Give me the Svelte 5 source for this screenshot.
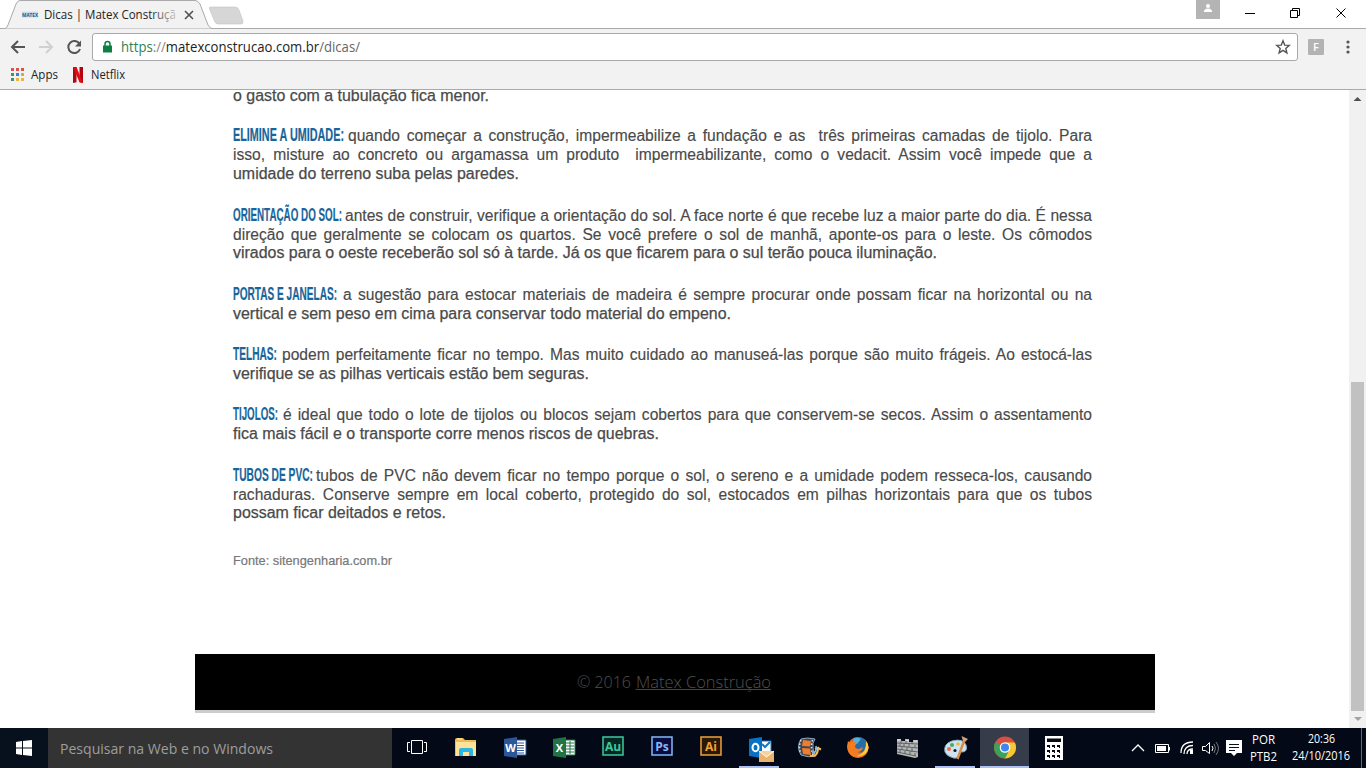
<script>
  const tips = [
    { title: 'ELIMINE A UMIDADE:', w: 111, gap: 4, lines: ['quando começar a construção, impermeabilize a fundação e as\u00a0 três primeiras camadas de tijolo. Para', 'isso, misture ao concreto ou argamassa um produto\u00a0 impermeabilizante, como o vedacit. Assim você impede que a', 'umidade do terreno suba pelas paredes.'], lw: 286 },
    { title: 'ORIENTAÇÃO DO SOL:', w: 109, gap: 3, lines: ['antes de construir, verifique a orientação do sol. A face norte é que recebe luz a maior parte do dia. É nessa', 'direção que geralmente se colocam os quartos. Se você prefere o sol de manhã, aponte-os para o leste. Os cômodos', 'virados para o oeste receberão sol só à tarde. Já os que ficarem para o sul terão pouca iluminação.'], lw: 704 },
    { title: 'PORTAS E JANELAS:', w: 104, gap: 6, lines: ['a sugestão para estocar materiais de madeira é sempre procurar onde possam ficar na horizontal ou na', 'vertical e sem peso em cima para conservar todo material do empeno.'], lw: 498 },
    { title: 'TELHAS:', w: 44, gap: 5, lines: ['podem perfeitamente ficar no tempo. Mas muito cuidado ao manuseá-las porque são muito frágeis. Ao estocá-las', 'verifique se as pilhas verticais estão bem seguras.'], lw: 356 },
    { title: 'TIJOLOS:', w: 45, gap: 5, lines: ['é ideal que todo o lote de tijolos ou blocos sejam cobertos para que conservem-se secos. Assim o assentamento', 'fica mais fácil e o transporte corre menos riscos de quebras.'], lw: 426 },
    { title: 'TUBOS DE PVC:', w: 80, gap: 3, lines: ['tubos de PVC não devem ficar no tempo porque o sol, o sereno e a umidade podem resseca-los, causando', 'rachaduras. Conserve sempre em local coberto, protegido do sol, estocados em pilhas horizontais para que os tubos', 'possam ficar deitados e retos.'], lw: 213 }
  ];
  const appColors = ['#d9534a', '#d9534a', '#d9534a', '#3d9a5f', '#3b7de0', '#e8a33a', '#3d9a5f', '#e9b53c', '#e9b53c'];
  const apps = ['task', 'folder', 'word', 'excel', 'au', 'ps', 'ai', 'outlook', 'film', 'firefox', 'wall', 'paint', 'chrome', 'calc'];
</script>

{#snippet label(text, width, size, color)}
  <svg class="label" width={width} height="20"><text x="0" y="15" font-size={size} fill={color} textLength={width} lengthAdjust="spacingAndGlyphs">{text}</text></svg>
{/snippet}

{#snippet adobe(text, color, bg)}
  <rect x="1" y="0" width="20" height="18" fill={bg} stroke={color} stroke-width="1.5" />
  <text x="11" y="13.500" text-anchor="middle" font-size="12" font-weight="700" fill={color}>{text}</text>
{/snippet}

<div class="screen">
  <header class="tabs">
    <svg class="strip" width="260" height="29">
      <path d="M0 28.5H5Q7 28 8 25L16 4Q17.500 .5 20 .5H195Q198 .5 200 4L208 25Q210 28.500 212 28.500H260V29H0Z" fill="#f2f2f2" stroke="#aaa" />
      <path d="M210 7H235Q238 7 239 10L243 21Q243.500 24 241 24H218Q215.500 24 214.500 21L209.500 9Q209 7 210 7Z" fill="#d6d6d6" stroke="#c2c2c2" stroke-width=".6" />
      <rect x="22" y="11.500" width="16" height="6" fill="#c8ddec" />
      <text x="22" y="17" font-size="6" font-weight="700" fill="#17618f" textLength="16" lengthAdjust="spacingAndGlyphs">MATEX</text>
      <defs><linearGradient id="fade" gradientUnits="userSpaceOnUse" x1="150" x2="178" y1="0" y2="0"><stop stop-color="#222" /><stop offset="1" stop-color="#222" stop-opacity=".15" /></linearGradient></defs>
      <text x="44" y="19" font-size="12" fill="url(#fade)" textLength="132" lengthAdjust="spacingAndGlyphs">Dicas | Matex Construçã</text>
      <path d="M185 11L193 19M193 11L185 19" stroke="#505050" stroke-width="1.600" />
    </svg>
    <svg class="winctl" width="170" height="28">
      <path d="M0 0H24V19H0Z" fill="#b4b4b4" /><circle cx="12" cy="6" r="2" fill="#fff" /><path d="M8 12V11Q8.500 8.500 12 8.500T16 11V12Z" fill="#fff" />
      <path d="M49 13.500H59M94.500 10.500H101.500V17.500H94.500ZM96.500 10V8.500H103.500V15.500H102M140.500 8.500L149.500 17.500M149.500 8.500L140.500 17.500" fill="none" stroke="#000" stroke-width="1" />
    </svg>
  </header>

  <div class="toolbar">
    <svg class="nav" width="92" height="36">
      <path d="M25 18H12.500M18 12L12 18L18 24" fill="none" stroke="#555" stroke-width="2" />
      <path d="M39 18H51.500M46 12L52 18L46 24" fill="none" stroke="#d0d0d0" stroke-width="2" />
      <path d="M79.500 15A6 6 0 1 0 80 20" fill="none" stroke="#555" stroke-width="2" /><path d="M81 11.500V17.500H75Z" fill="#555" />
    </svg>
    <div class="address">
      <svg class="lock" width="11" height="14"><path d="M1 5.500H10V12.500H1Z" fill="#0b8043" /><path d="M3 6V4Q3 1.500 5.500 1.500T8 4V6" fill="none" stroke="#0b8043" stroke-width="1.500" /></svg>
      <svg width="239" height="20" class="label"><text x="0" y="15" font-size="14" textLength="239" lengthAdjust="spacingAndGlyphs"><tspan fill="#2b8253">https</tspan><tspan fill="#858585">://</tspan><tspan fill="#222">matexconstrucao.com.br</tspan><tspan fill="#666">/dicas/</tspan></text></svg>
      <svg class="star" width="16" height="16"><path d="M8 1.800L9.700 6.100L14.300 6.400L10.800 9.400L11.900 13.900L8 11.400L4.100 13.900L5.200 9.400L1.700 6.400L6.300 6.100Z" fill="none" stroke="#555" stroke-width="1.400" /></svg>
    </div>
    <span class="ext">F</span>
    <svg width="6" height="16" class="dots"><circle cx="3" cy="3" r="1.600" /><circle cx="3" cy="8" r="1.600" /><circle cx="3" cy="13" r="1.600" /></svg>
  </div>

  <div class="bookmarks">
    <span class="grid">{#each appColors as c}<i style:background={c}></i>{/each}</span>
    {@render label('Apps', 27, 12, '#222')}
    <svg class="n" width="10" height="16"><path d="M0 0H3.500V15.300L0 16ZM6.500 0H10V16L6.500 15.300Z" fill="#b0060f" /><path d="M0 0H3.500L10 16L6.500 15.300Z" fill="#e50914" /></svg>
    {@render label('Netflix', 34, 12, '#222')}
  </div>

  <main>
    <article>
      <p class="first"><svg class="row" width="258" height="20"><text x="0" y="14" textLength="256" lengthAdjust="spacingAndGlyphs">o gasto com a tubulação fica menor.</text></svg></p>
      {#each tips as tip}
        <section>
          {#each tip.lines as line, i}
            {#if i === 0}
              <div class="lead"><svg width={tip.w} height="19" style:margin-right="{tip.gap}px"><text class="title" x="0" y="14.600" textLength={tip.w} lengthAdjust="spacingAndGlyphs">{tip.title}</text></svg><span>{line}</span></div>
            {:else if i < tip.lines.length - 1}
              <div class="full">{line}</div>
            {:else}
              <div><svg class="row" width={tip.lw + 2} height="19"><text x="0" y="14.200" textLength={tip.lw} lengthAdjust="spacingAndGlyphs">{line}</text></svg></div>
            {/if}
          {/each}
        </section>
      {/each}
      <svg class="source" width="160" height="20"><text x="0" y="15" textLength="159" lengthAdjust="spacingAndGlyphs">Fonte: sitengenharia.com.br</text></svg>
      <footer>
        <svg width="196" height="26"><g font-size="16.500"><text x="0" y="19" textLength="54" lengthAdjust="spacingAndGlyphs">© 2016</text><text x="59" y="19" textLength="135" lengthAdjust="spacingAndGlyphs">Matex Construção</text></g><path d="M58.500 20.500H194" stroke="#454545" /></svg>
      </footer>
    </article>
    <aside>
      <svg width="17" height="17"><path d="M4.500 11L8.500 7L12.500 11Z" fill="#505050" /></svg>
      <b></b>
      <svg width="17" height="17"><path d="M5 6L9 10L13 6Z" fill="#a3a3a3" /></svg>
    </aside>
  </main>

  <nav class="taskbar">
    <svg class="start" width="48" height="40"><path d="M16 14L22 13V19.500H16ZM23 13L32 12V19.500H23ZM16 20.500H22V27L16 26ZM23 20.500H32V28L23 27Z" fill="#fff" /></svg>
    <div class="search">{@render label('Pesquisar na Web e no Windows', 213, 15, '#9d9d9d')}</div>
    <div class="apps">
      {#each apps as app}
        <div class="app {app}">
          <svg width="26" height="24" viewBox="-2 -1 26 24" overflow="visible">
            {#if app === 'task'}
              <path d="M5.500 3.500H16.500V16.500H5.500ZM4 5.500H1.500V14.500H4M18 5.500H20.500V14.500H18" fill="none" stroke="#fff" />
            {:else if app === 'folder'}
              <path d="M0 3Q0 1 2 1H8L10 3H21V19H0Z" fill="#e9bd56" /><path d="M1 5H21V19H1Z" fill="#ffe298" /><path d="M4 19V13Q4 11 6 11H16Q18 11 18 13V19H14V15H8V19Z" fill="#29b6e5" /><path d="M2 2H7" stroke="#fff3c6" />
            {:else if app === 'word' || app === 'excel'}
              <path d="M10 3H22V18H10Z" fill="#fff" stroke={app === 'word' ? '#2b579a' : '#217346'} />
              {#if app === 'word'}<path d="M13 6H20M13 8.500H20M13 11H20M13 13.500H20M13 16H20" stroke="#2b579a" />{:else}<path d="M13 6H21M13 9H21M13 12H21M13 15H21M17 4V17" stroke="#217346" />{/if}
              <path d="M0 2L13 0V21L0 19Z" fill={app === 'word' ? '#2b579a' : '#217346'} /><text x="6.500" y="14.500" text-anchor="middle" fill="#fff" font-size="11" font-weight="700">{app === 'word' ? 'W' : 'X'}</text>
            {:else if app === 'au'}{@render adobe('Au', '#3fc7a0', '#052722')}
            {:else if app === 'ps'}{@render adobe('Ps', '#86b9f5', '#0b0b43')}
            {:else if app === 'ai'}{@render adobe('Ai', '#f1a33a', '#2b1907')}
            {:else if app === 'outlook'}
              <path d="M11 4H22V17H11Z" fill="#fff" stroke="#1677c7" /><path d="M13 7L16 10L21 5" fill="none" stroke="#1677c7" stroke-width="2" /><path d="M0 2L13 0V21L0 19Z" fill="#0872c4" /><ellipse cx="6.500" cy="10.500" rx="3" ry="3.700" fill="none" stroke="#fff" stroke-width="2" /><path d="M10 14H25V25H10Z" fill="#e8b36c" /><path d="M10 14L17.500 20L25 14" fill="#f6d2a0" stroke="#fff" />
            {:else if app === 'film'}
              <path d="M3 2Q9 0 17 2Q14 6 15 11Q15 16 18 19Q10 21 3 18Q-2 10 3 2Z" fill="#394756" stroke="#93a8bd" /><path d="M5 3L13 4L12 9.500L4 9ZM4 11L12 11.500L13 18L5 17Z" fill="#f47b28" /><path d="M3 3Q0 10 3 17M14.500 3Q12 11 15.500 19" fill="none" stroke="#d7e7f2" stroke-width="1.500" stroke-dasharray="1.500 2" /><path d="M12 19Q20 20 20 11L17 12M20 11L23 12.500" fill="none" stroke="#f3bb4e" stroke-width="2" /><path d="M14 16Q19 16 18 9" fill="none" stroke="#8bb7df" stroke-width="1.800" />
            {:else if app === 'firefox'}
              <circle cx="11" cy="10.500" r="10.500" fill="#ed651e" /><circle cx="12" cy="8" r="7.800" fill="#276ba9" /><path d="M7 1Q11 0 14 2L10 7L5 6Z" fill="#50b3db" /><path d="M1 4L3 6Q5 3 7 5L10 6L8 9Q8 12 12 12L16 10Q15 15 10 15Q16 18 20 12Q22 8 19 4Q24 11 19 17Q13 23 5 19Q-2 14 1 4Z" fill="#f47c20" /><path d="M19 4Q24 10 19 16Q15 20 10 19Q20 16 19 4Z" fill="#ffd03c" />
            {:else if app === 'wall'}
              <path d="M1 2H5V4H9V2H13V5H17V3H22V20L19 21L1 17Z" fill="#b5b7b6" /><path d="M1 6L22 7M1 9L22 11M1 12L22 15M1 15L20 19M5 3V6M10 4V7M16 5V7M4 6V9M8 7V10M13 7V10M19 8V11M6 10V13M11 10V14M16 11V15M4 13V16M9 14V17M14 14V18M19 16V19" stroke="#565b5c" stroke-width=".9" /><path d="M1 3H5M10 3L13 4M18 4H21" stroke="#e5e5e5" />
            {:else if app === 'paint'}
              <path d="M0 15Q-2 7 7 4Q18 1 21 8Q23 15 17 15Q14 14 14 18Q12 23 6 20Q2 19 0 15Z" fill="#cfe2ef" stroke="#8eadc2" /><circle cx="4" cy="12" r="2" fill="#ed6b4f" /><circle cx="7" cy="8" r="2" fill="#4aa75c" /><circle cx="13" cy="7" r="1.800" fill="#e3bd42" /><circle cx="10" cy="13.500" r="1.600" fill="#111a29" /><path d="M19 4L12.500 22" stroke="#d58f49" stroke-width="2.500" /><path d="M16.500 -1L23 2L20 5L18 4Z" fill="#d2a276" />
            {:else if app === 'chrome'}
              <circle cx="11" cy="10.500" r="11" fill="#dc4e40" /><path d="M11 10.500L1.500 5A11 11 0 0 0 11 21.500L16 13Z" fill="#39a35b" /><path d="M11 5.500H20.800A11 11 0 0 1 11 21.500L16 12Z" fill="#f6c933" /><circle cx="11" cy="10.500" r="5.300" fill="#fff" /><circle cx="11" cy="10.500" r="4" fill="#4086ef" />
            {:else}
              <path d="M2 -1H20V23H2Z" fill="#fff" /><path d="M4 1.500H18V5H4Z" fill="#050914" />
              {#each [8, 13, 18] as y}{#each [4, 9, 14] as x}<path d="M{x} {y}H{x + 3}V{y + 3}H{x + 2}V{y + 2}H{x}Z" fill="#050914" />{/each}{/each}
            {/if}
          </svg>
        </div>
      {/each}
    </div>
    <svg class="tray" width="116" height="40">
      <g fill="none" stroke="#fff"><path d="M2 23L8 17L14 23" stroke-width="1.300" /><path d="M25.500 16.500H38.500V24.500H25.500ZM39.500 19V22.500" /><path d="M51 25Q51 14 63 14M54 26Q54 17.500 63 17.500M57 26Q57 21 63 21" stroke-width="1.300" /><path d="M72.500 18.500H75.500L79.500 14.500V25.500L75.500 22.500H72.500Z" /><path d="M82 18Q84 20 82 23" /><path d="M84 16Q87 20 84 25M86 14Q91 20 86 27" stroke="#777" /></g>
      <path d="M27 18H36V23H27ZM60 22H63V26H60ZM96 12H112V25H107L104 28L101 25H96Z" fill="#fff" /><path d="M99 16.500H109M99 19.500H109M99 22.500H105" stroke="#07101c" />
    </svg>
    <div class="clock">{@render label('POR', 23, 12, '#fff')}{@render label('PTB2', 27, 12, '#fff')}</div>
    <div class="clock date">{@render label('20:36', 27, 12, '#fff')}{@render label('24/10/2016', 58, 12, '#fff')}</div>
    <div class="desk"></div>
  </nav>
</div>

<style>
  :global(body) { margin: 0; overflow: hidden; }
  .screen { width: 1366px; height: 768px; display: flex; flex-direction: column; background: #fff; font-family: "Open Sans", "Noto Sans", sans-serif; overflow: hidden; }
  svg { display: block; flex: none; }
  .label, article svg { overflow: visible; }
  .tabs { height: 29px; flex: none; display: flex; justify-content: space-between; background: linear-gradient(#fff 28px, #aaa 28px); }
  .toolbar { height: 36px; flex: none; display: flex; align-items: center; background: #f2f2f2; }
  .address { width: 1204px; height: 26px; border: 1px solid #a9a9a9; border-radius: 3px; background: #fff; display: flex; align-items: center; }
  .lock { margin: 0 8px 0 9px; }
  .star { margin-left: auto; margin-right: 6px; }
  .ext { width: 16px; height: 16px; margin-left: 10px; background: #b3b3b3; color: #fff; font-size: 11px; font-weight: 600; line-height: 16px; text-align: center; border-radius: 1px; }
  .dots { margin-left: 21px; fill: #555; }
  .bookmarks { height: 24px; flex: none; border-bottom: 1px solid #aaa; background: #f2f2f2; display: flex; align-items: center; padding: 0 0 0 11px; }
  .bookmarks svg { margin-top: -6px; }
  .grid { display: grid; grid-template-columns: repeat(3, 3px); gap: 2px; margin: -5px 7px 0 0; }
  .grid i { width: 3px; height: 3px; }
  .bookmarks .n { margin-left: 15px; margin-right: 8px; margin-top: -5px; }
  main { height: 638px; flex: none; display: flex; justify-content: space-between; overflow: hidden; }
  article { width: 960px; margin-left: 195px; font: 15.6px "Liberation Sans", Arial, sans-serif; color: #4a4a4a; -webkit-text-stroke: .15px #4a4a4a; }
  article text { fill: #4a4a4a; }
  article .row text { stroke: #4a4a4a; stroke-width: .25px; }
  .first { margin: -3.500px 0 19.500px 38px; height: 20px; }
  section { width: 859px; margin: 0 0 21.400px 38px; line-height: 19.400px; white-space: nowrap; }
  section > div { height: 19.400px; }
  .full { text-align: justify; text-align-last: justify; white-space: normal; }
  .lead { display: flex; }
  .lead span { flex: 1; text-align: justify; text-align-last: justify; white-space: normal; }
  article .title { fill: #17659a; stroke: #17659a; stroke-width: .2px; font: 700 18px "Liberation Sans", Arial, sans-serif; }
  .source { margin: 26px 0 0 38px; }
  .source text { font-size: 13px; fill: #777; stroke: #777; stroke-width: .2px; }
  footer { width: 960px; height: 56px; margin-top: 84px; background: #000; border-bottom: 3px solid #ccc; display: flex; align-items: center; justify-content: center; font-family: "Open Sans", sans-serif; font-weight: 300; }
  footer g text { fill: #505050; }
  aside { width: 17px; height: 638px; background: #f1f1f1; display: flex; flex-direction: column; }
  aside b { width: 13px; height: 329px; background: #c1c1c1; margin: 275px 0 0 2px; }
  .taskbar { height: 40px; flex: none; display: flex; background: #030916; }
  .start { background: #07101d; }
  .search { width: 332px; height: 29px; padding: 11px 0 0 12px; background: #333; }
  .apps { display: flex; }
  .app { width: 49px; height: 40px; display: flex; align-items: center; justify-content: center; box-sizing: border-box; }
  .outlook, .paint { background: linear-gradient(#acc0f6, #acc0f6) 4px 38px / 40px 2px no-repeat; }
  .chrome { background: linear-gradient(#363c49 38px, #acc0f6 38px); }
  .tray { margin-left: 52px; }
  .clock { width: 30px; height: 40px; display: flex; flex-direction: column; align-items: center; justify-content: space-between; box-sizing: border-box; padding: 1px 0 5px; margin-left: 2px; }
  .clock svg { height: 17px; }
  .date { width: 60px; margin-left: 13px; padding-top: 0; padding-bottom: 6px; }
  .desk { border-left: 1px solid #666; margin-left: auto; width: 4px; }
</style>
